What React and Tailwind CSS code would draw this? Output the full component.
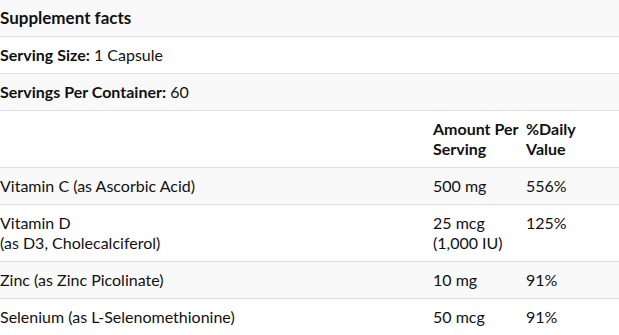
const rows = [
  { name: 'Vitamin C (as Ascorbic Acid)', amount: '500 mg', dv: '556%' },
  { name: ['Vitamin D', '(as D3, Cholecalciferol)'], amount: ['25 mcg', '(1,000 IU)'], dv: '125%' },
  { name: 'Zinc (as Zinc Picolinate)', amount: '10 mg', dv: '91%' },
  { name: 'Selenium (as L-Selenomethionine)', amount: '50 mcg', dv: '91%' },
];

// Muestra un texto en una o dos líneas.
function Lines({ value }) {
  if (!Array.isArray(value)) return value;
  return value.map((line, i) => (
    <span key={i} className="block">{line}</span>
  ));
}

export default function App() {
  return (
    <div className="w-[619px] h-[335px] overflow-hidden bg-white text-[16px] leading-5 text-[#111] font-['Lato','Liberation_Sans',sans-serif]">
      <div className="bg-[#f9f9f9] border-b border-[#dfdfdf] py-2 font-bold text-[17px]">Supplement facts</div>
      <div className="bg-white border-b border-[#dfdfdf] py-2">
        <span className="font-bold">Serving Size:</span> 1 Capsule
      </div>
      <div className="bg-[#f9f9f9] border-b border-[#dfdfdf] py-2">
        <span className="font-bold">Servings Per Container:</span> 60
      </div>
      <div className="grid grid-cols-[433px_93px_1fr] bg-white border-b border-[#dfdfdf] py-2 font-bold">
        <div></div>
        <div>Amount Per<br />Serving</div>
        <div>%Daily<br />Value</div>
      </div>
      {rows.map((row, i) => (
        <div
          key={i}
          className={`grid grid-cols-[433px_93px_1fr] border-b border-[#dfdfdf] py-2 ${i % 2 === 0 ? 'bg-[#f9f9f9]' : 'bg-white'}`}
        >
          <div><Lines value={row.name} /></div>
          <div><Lines value={row.amount} /></div>
          <div>{row.dv}</div>
        </div>
      ))}
    </div>
  );
}
